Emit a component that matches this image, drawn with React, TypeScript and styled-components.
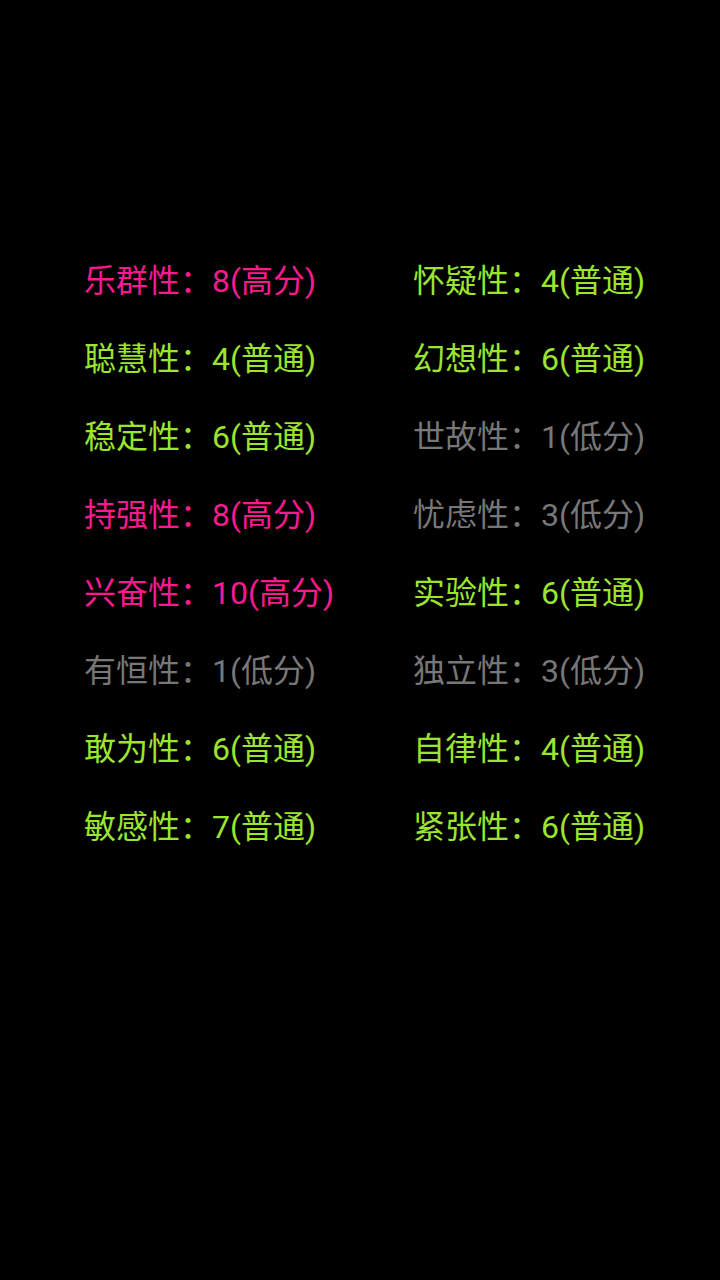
import React from "react";
import styled, { createGlobalStyle } from "styled-components";

const Global = createGlobalStyle`
  html, body { margin: 0; padding: 0; background: #000; }
  body { font-family: Roboto, "Noto Sans CJK SC", sans-serif; }
`;

const Page = styled.div`
  width: 720px;
  height: 1280px;
  background: #000;
  box-sizing: border-box;
  padding-top: 242px;
  padding-left: 84px;
`;

const Grid = styled.div`
  display: grid;
  grid-template-columns: 329px auto;
  grid-auto-rows: 78px;
`;

type Level = "high" | "normal" | "low";

const colors: Record<Level, string> = {
  high: "#f81a8e",
  normal: "#9be52e",
  low: "#777777",
};

const Cell = styled.div<{ $level: Level }>`
  font-size: 32px;
  line-height: 78px;
  white-space: nowrap;
  color: ${(p) => colors[p.$level]};
`;

const levelText: Record<Level, string> = {
  high: "高分",
  normal: "普通",
  low: "低分",
};

const items: [string, number, Level][] = [
  ["乐群性", 8, "high"],
  ["怀疑性", 4, "normal"],
  ["聪慧性", 4, "normal"],
  ["幻想性", 6, "normal"],
  ["稳定性", 6, "normal"],
  ["世故性", 1, "low"],
  ["持强性", 8, "high"],
  ["忧虑性", 3, "low"],
  ["兴奋性", 10, "high"],
  ["实验性", 6, "normal"],
  ["有恒性", 1, "low"],
  ["独立性", 3, "low"],
  ["敢为性", 6, "normal"],
  ["自律性", 4, "normal"],
  ["敏感性", 7, "normal"],
  ["紧张性", 6, "normal"],
];

export default function App() {
  return (
    <>
      <Global />
      <Page>
        <Grid>
          {items.map(([name, score, level]) => (
            <Cell key={name} $level={level}>
              {name}：{score}({levelText[level]})
            </Cell>
          ))}
        </Grid>
      </Page>
    </>
  );
}
